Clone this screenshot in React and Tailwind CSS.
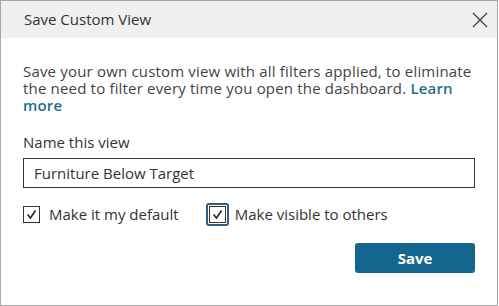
import React from "react";

function Check({ focused }) {
  return (
    <span
      className={`flex items-center justify-center ${
        focused ? "rounded-[3px] border-2 border-[#2b5f86] p-[1px]" : ""
      }`}
    >
      <span className="flex h-[17px] w-[17px] items-center justify-center border border-[#333]">
        <svg width="13" height="13" viewBox="0 0 13 13">
          <path d="M2.5 6.5 L5.5 10 L10.5 2.5" fill="none" stroke="#222" strokeWidth="1.6" />
        </svg>
      </span>
    </span>
  );
}

export default function App() {
  return (
    <div
      className="h-[306px] w-[499px] bg-white"
      style={{ fontFamily: '"Open Sans", "Liberation Sans", sans-serif' }}
    >
      <div className="flex h-[306px] w-[498px] flex-col border border-[#a8a8a8] text-[#333]">
        <div className="flex h-[37px] items-center justify-between bg-[#f0f0f0] pl-[23px] pr-[8px]">
          <span className="text-[15px]">Save Custom View</span>
          <svg width="18" height="18" viewBox="0 0 18 18">
            <path d="M2 2 L16 16 M16 2 L2 16" stroke="#444" strokeWidth="1.3" />
          </svg>
        </div>
        <div className="flex flex-1 flex-col px-[22px] pt-[25px]">
          <p className="text-[15px] leading-[17px] tracking-[0.18px] text-[#444]">
            Save your own custom view with all filters applied, to eliminate the need to filter every time you open the dashboard.{" "}
            <a className="font-semibold text-[#1f6e8c]">Learn more</a>
          </p>
          <label className="mt-[18px] text-[15px] leading-[20px]">Name this view</label>
          <div className="mt-[6px] flex h-[30px] items-center border border-[#333] px-[10px] text-[15px]">
            Furniture Below Target
          </div>
          <div className="mt-[15px] flex items-center">
            <div className="flex items-center gap-[9px]">
              <Check />
              <span className="text-[15px]">Make it my default</span>
            </div>
            <div className="ml-[27px] flex items-center gap-[6px]">
              <Check focused />
              <span className="text-[15px]">Make visible to others</span>
            </div>
          </div>
          <div className="mt-[17px] flex justify-end">
            <button className="h-[30px] w-[120px] rounded-[3px] bg-[#14668e] text-[15px] font-bold text-white">
              Save
            </button>
          </div>
        </div>
      </div>
    </div>
  );
}
